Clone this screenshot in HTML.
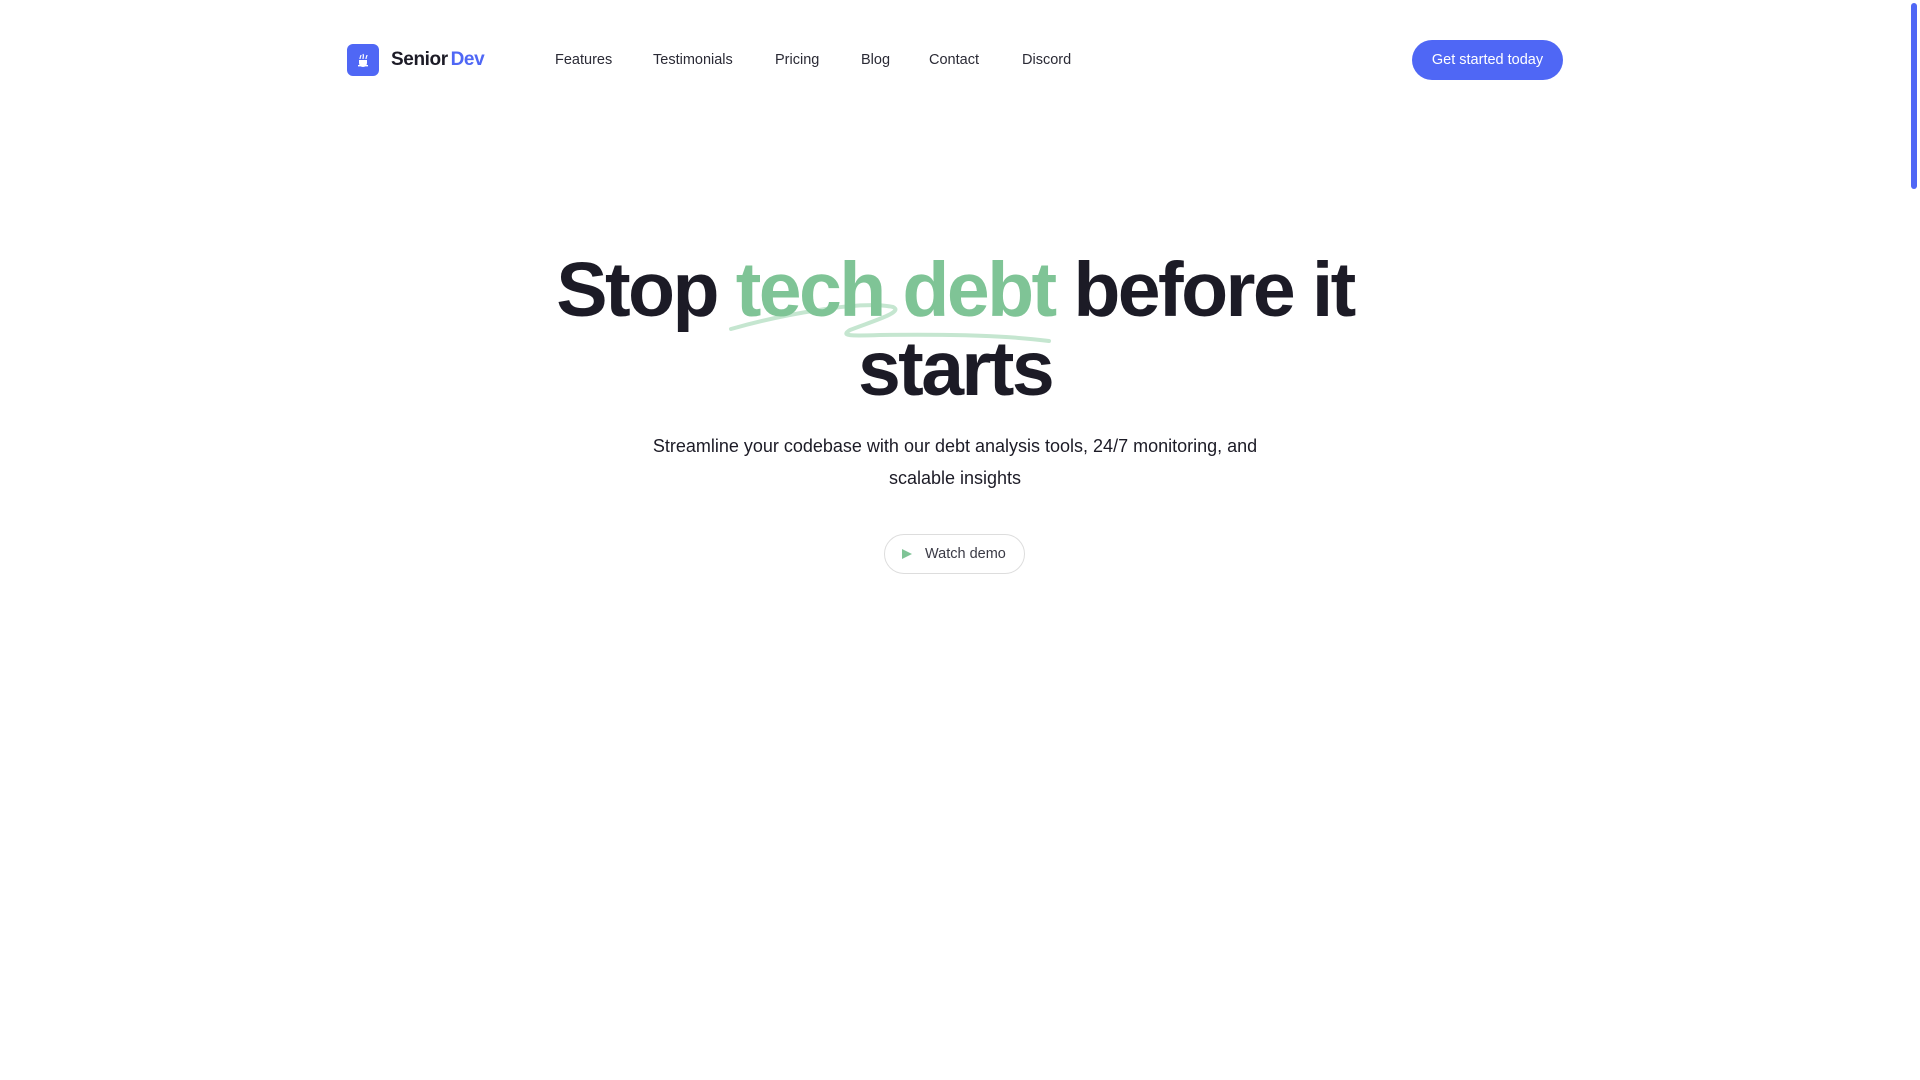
<!DOCTYPE html>
<html><head><meta charset="utf-8"><style>
*{margin:0;padding:0;box-sizing:border-box}
html,body{width:1920px;height:1080px;overflow:hidden;background:#fff;font-family:"Liberation Sans",sans-serif;color:#1c1b26}
.logo{position:absolute;left:347px;top:44px;width:32px;height:32px;background:#4f67f5;border-radius:6px}
.brand{position:absolute;left:391px;top:49px;font-size:19px;font-weight:bold;letter-spacing:-0.4px}
.brand span{color:#4f67f5;margin-left:-2px}
.nav a{position:absolute;top:52px;font-size:14.5px;color:#2a2a35;text-decoration:none}
.btn{position:absolute;left:1412px;top:40px;width:151px;height:40px;border-radius:20px;background:#4f67f5;color:#fff;font-size:14.5px;text-align:center;line-height:40px}
.sb{position:absolute;left:1911px;top:3px;width:6px;height:186px;border-radius:3px;background:#4f67f5}
h1{position:absolute;left:0;width:1910px;top:251px;text-align:center;font-size:77px;line-height:79px;font-weight:bold;letter-spacing:-2.6px;color:#1c1b26}
h1 .g{color:#7fc496}
.sub{position:absolute;left:0;width:1910px;top:430px;text-align:center;font-size:18px;line-height:32px;color:#1c1b26}
.demo{position:absolute;left:884px;top:534px;width:141px;height:40px;border:1px solid #ddd;border-radius:20px;font-size:14.5px;line-height:38px;color:#3a3a45;padding-left:40px}
.demo i{position:absolute;left:17px;top:14px;width:0;height:0;border-left:10px solid #7fc496;border-top:5.5px solid transparent;border-bottom:5.5px solid transparent}
</style></head><body>
<div class="logo"><svg width="32" height="32" viewBox="0 0 32 32"><path d="M13 15c0-2 1-3 1-4M16 15c0-2 1-3 0-5M19 15c0-2 1-3 1-4" stroke="#fff" stroke-width="1.2" fill="none"/><path d="M12 16h8v3a4 4 0 0 1-8 0z" fill="#fff"/><rect x="11" y="21" width="10" height="1.4" fill="#fff"/></svg></div>
<div class="brand">Senior <span>Dev</span></div>
<div class="nav">
<a style="left:555px">Features</a><a style="left:653px">Testimonials</a><a style="left:775px">Pricing</a><a style="left:861px">Blog</a><a style="left:929px">Contact</a><a style="left:1022px">Discord</a>
</div>
<div class="btn">Get started today</div>
<div class="sb"></div>
<svg style="position:absolute;left:0;top:0" width="1920" height="400"><path d="M731 329 C780 315 860 300 893 307 C905 312 870 322 850 330 C840 336 850 336 880 335 C960 334 1010 336 1049 341" stroke="#c5e6d0" stroke-width="4" fill="none" stroke-linecap="round"/></svg>
<h1>Stop <span class="g">tech debt</span> before it<br>starts</h1>
<div class="sub">Streamline your codebase with our debt analysis tools, 24/7 monitoring, and<br>scalable insights</div>
<div class="demo"><i></i>Watch demo</div>
</body></html>
